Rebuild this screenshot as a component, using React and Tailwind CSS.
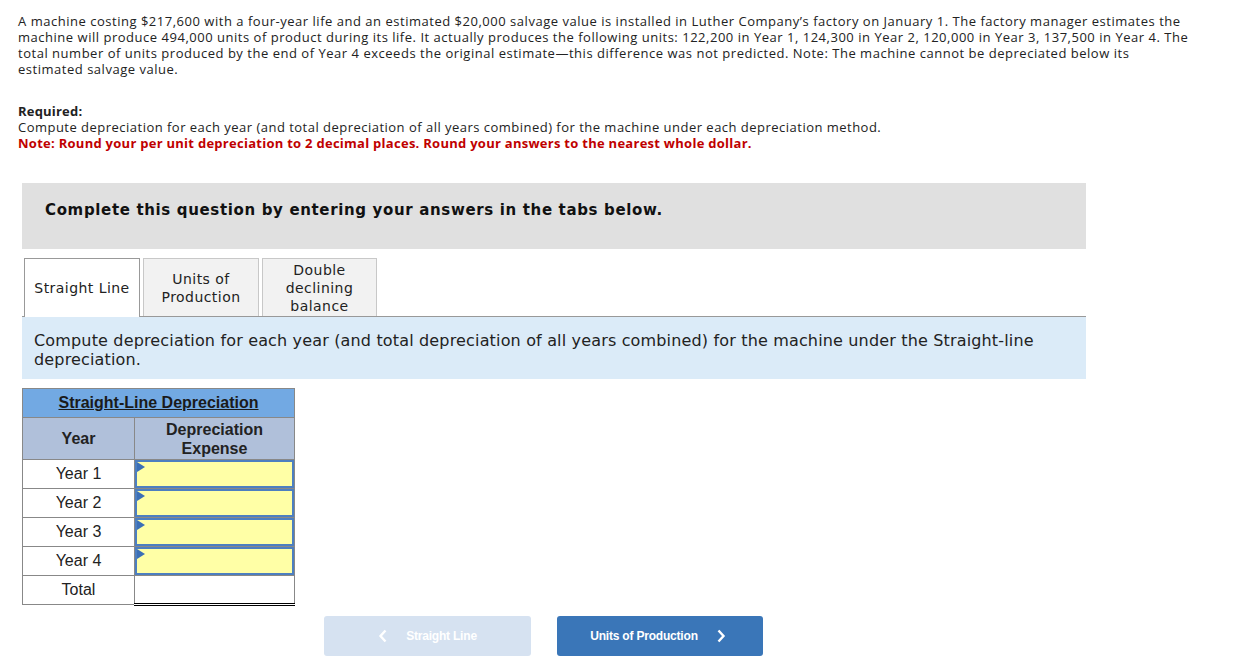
import React from 'react';

const rows = ['Year 1', 'Year 2', 'Year 3', 'Year 4'];

const InputCell = () => (
    <div className="relative h-full w-full bg-[#ffffa6] border-2 border-[#4d7fc0]">
        <span className="absolute left-0 top-0 w-0 h-0 border-y-[5px] border-y-transparent border-l-[8px] border-l-[#3b6fb6]"></span>
    </div>
);

const App = () => {
    return (
        <div className="w-[1240px] h-[662px] bg-white relative overflow-hidden">
            <div className="pl-[18px] pt-[13px] text-[13px] leading-[16px] text-[#222] font-['Open_Sans',sans-serif] tracking-[0.52px]">
                <p className="whitespace-nowrap">
                    A machine costing $217,600 with a four-year life and an estimated $20,000 salvage value is installed in Luther Company’s factory on January 1. The factory manager estimates the<br />
                    machine will produce 494,000 units of product during its life. It actually produces the following units: 122,200 in Year 1, 124,300 in Year 2, 120,000 in Year 3, 137,500 in Year 4. The<br />
                    total number of units produced by the end of Year 4 exceeds the original estimate—this difference was not predicted. Note: The machine cannot be depreciated below its<br />
                    estimated salvage value.
                </p>
                <p className="mt-[26px] font-bold tracking-[0.2px]">Required:</p>
                <p className="whitespace-nowrap tracking-[0.48px]">Compute depreciation for each year (and total depreciation of all years combined) for the machine under each depreciation method.</p>
                <p className="whitespace-nowrap font-bold text-[#c00000] tracking-[0.27px]">Note: Round your per unit depreciation to 2 decimal places. Round your answers to the nearest whole dollar.</p>
            </div>

            <div className="ml-[22px] mt-[32px] w-[1064px]">
                <div className="h-[66px] bg-[#e0e0e0] flex items-center pl-[23px] pb-[11px] font-['DejaVu_Sans','Verdana',sans-serif] font-bold text-[15px] tracking-[0.65px] text-[#111]">
                    Complete this question by entering your answers in the tabs below.
                </div>

                <div className="mt-[9px] flex items-end gap-[3px] pl-[2px] border-b border-[#999] h-[59px] font-['DejaVu_Sans','Verdana',sans-serif] text-[14px] leading-[18px] tracking-[0.45px] text-[#222]">
                    <div className="w-[116px] h-[59px] -mb-px bg-white border border-b-0 border-[#999] flex items-center justify-center text-center">
                        Straight Line
                    </div>
                    <div className="w-[116px] h-[58px] bg-[#f2f2f2] border border-b-0 border-[#c8c8c8] flex items-center justify-center text-center">
                        Units of<br />Production
                    </div>
                    <div className="w-[115px] h-[58px] bg-[#f2f2f2] border border-b-0 border-[#c8c8c8] flex items-center justify-center text-center">
                        Double<br />declining<br />balance
                    </div>
                </div>

                <div className="h-[62px] bg-[#dbebf8] pl-[12px] pt-[14px] font-['DejaVu_Sans','Verdana',sans-serif] text-[16px] leading-[19px] tracking-[0.16px] text-[#222]">
                    Compute depreciation for each year (and total depreciation of all years combined) for the machine under the Straight-line<br />depreciation.
                </div>

                <table className="mt-[9px] border-collapse font-['Liberation_Sans','Arial',sans-serif] text-[16px] text-[#222]">
                    <thead>
                        <tr className="h-[29px]">
                            <th colSpan={2} className="bg-[#72a9e3] border border-[#888] font-bold underline text-[#1a1a1a]">Straight-Line Depreciation</th>
                        </tr>
                        <tr className="h-[42px] bg-[#b0c0da]">
                            <th className="w-[112px] border border-[#888] font-bold">Year</th>
                            <th className="w-[160px] border border-[#888] font-bold leading-[19px]">Depreciation<br />Expense</th>
                        </tr>
                    </thead>
                    <tbody>
                        {rows.map(r => (
                            <tr key={r} className="h-[29px]">
                                <td className="border border-[#888] text-center">{r}</td>
                                <td className="border border-[#888] p-0 h-[29px]"><InputCell /></td>
                            </tr>
                        ))}
                        <tr className="h-[29px]">
                            <td className="border border-[#888] text-center">Total</td>
                            <td className="border border-[#888] border-b-[3px] border-b-black border-double p-0"></td>
                        </tr>
                    </tbody>
                </table>
            </div>

            <div className="absolute left-[324px] top-[616px] flex gap-[26px] font-['Liberation_Sans','Arial',sans-serif] text-[12px] font-bold text-white tracking-[-0.2px]">
                <div className="w-[207px] h-[40px] rounded-[3px] bg-[#d6e2f1] flex items-center justify-center gap-[18px]">
                    <svg width="10" height="14" viewBox="0 0 10 14"><path d="M7.5 1.5 L2.5 7 L7.5 12.5" stroke="white" strokeWidth="2.4" fill="none" /></svg>
                    <span>Straight Line</span>
                </div>
                <div className="w-[206px] h-[40px] rounded-[3px] bg-[#3a76b8] flex items-center justify-center gap-[18px]">
                    <span className="ml-[-4px]">Units of Production</span>
                    <svg width="10" height="14" viewBox="0 0 10 14"><path d="M2.5 1.5 L7.5 7 L2.5 12.5" stroke="white" strokeWidth="2.4" fill="none" /></svg>
                </div>
            </div>
        </div>
    );
};

export default App;
